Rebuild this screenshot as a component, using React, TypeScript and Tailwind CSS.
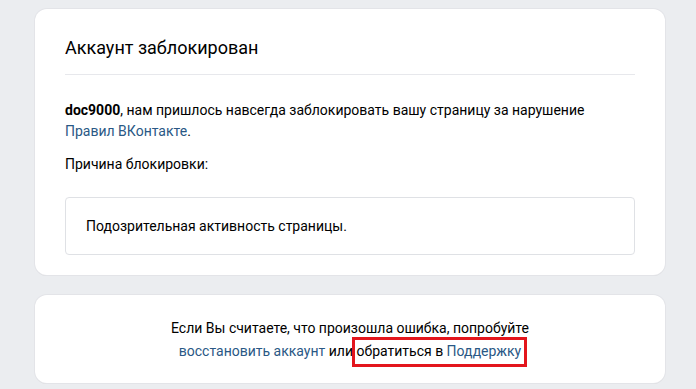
import React from "react";

export default function App() {
  return (
    <div
      className="w-[696px] h-[389px] bg-[#ebedf0] overflow-hidden pt-[9px] pl-[35px]"
      style={{ fontFamily: "Roboto, 'Liberation Sans', sans-serif" }}
    >
      <div className="w-[630px] flex flex-col gap-[20px]">
        <div className="bg-white rounded-[12px] shadow-[0_0_0_1px_#e3e4e8,0_1px_0_0_#d7d8db] px-[30px] pt-[26px] pb-[20px]">
          <div className="text-[18px] leading-[26px] text-[#000] pb-[13px] border-b border-[#e7e8ec]">
            Аккаунт заблокирован
          </div>
          <div className="text-[14px] leading-[21px] text-[#000] mt-[25px]">
            <b className="font-bold">doc9000</b>, нам пришлось навсегда заблокировать вашу страницу за нарушение
            <br />
            <span className="text-[#2a5885]">Правил ВКонтакте</span>.
          </div>
          <div className="text-[14px] leading-[21px] text-[#000] mt-[12px]">
            Причина блокировки:
          </div>
          <div className="mt-[22px] border border-[#dfe1e5] rounded-[4px] h-[58px] flex items-center px-[20px] text-[14px] text-[#000]">
            Подозрительная активность страницы.
          </div>
        </div>
        <div className="bg-white rounded-[12px] shadow-[0_0_0_1px_#e3e4e8,0_1px_0_0_#d7d8db] h-[88px] pt-[1px] flex flex-col items-center justify-center text-[14px] leading-[23px] text-[#000]">
          <div>Если Вы считаете, что произошла ошибка, попробуйте</div>
          <div>
            <span className="text-[#2a5885]">восстановить аккаунт</span> или{" "}
            <span className="relative">
              обратиться в <span className="text-[#2a5885]">Поддержку</span>
              <span className="absolute left-[-5px] right-[-6px] top-[-6px] bottom-[-8px] border-[3px] border-[#e3161d]" />
            </span>
          </div>
        </div>
      </div>
    </div>
  );
}
